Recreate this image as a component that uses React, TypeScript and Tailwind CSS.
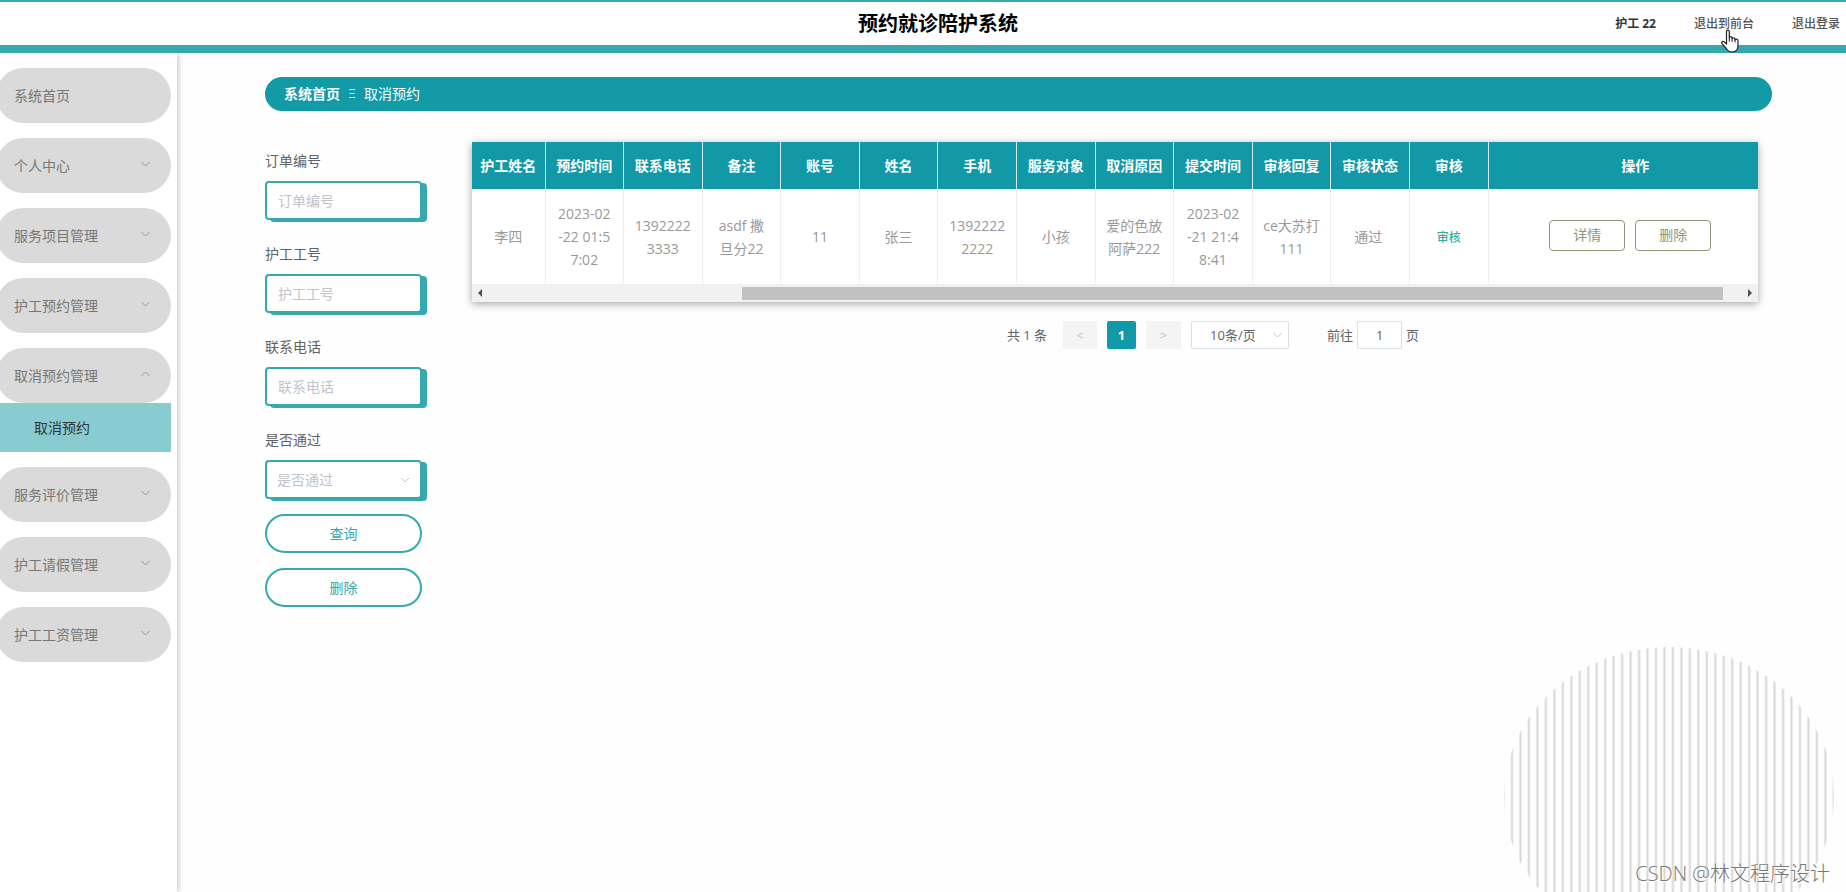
import type { ReactNode } from 'react'

const menus = [
  { label: '系统首页' },
  { label: '个人中心', arrow: 'down' },
  { label: '服务项目管理', arrow: 'down' },
  { label: '护工预约管理', arrow: 'down' },
  { label: '取消预约管理', arrow: 'up', children: ['取消预约'] },
  { label: '服务评价管理', arrow: 'down' },
  { label: '护工请假管理', arrow: 'down' },
  { label: '护工工资管理', arrow: 'down' },
]

const columns = [
  { title: '护工姓名', value: '李四' },
  { title: '预约时间', value: '2023-02\n-22 01:5\n7:02' },
  { title: '联系电话', value: '1392222\n3333' },
  { title: '备注', value: 'asdf 撒\n旦分22' },
  { title: '账号', value: '11' },
  { title: '姓名', value: '张三' },
  { title: '手机', value: '1392222\n2222' },
  { title: '服务对象', value: '小孩' },
  { title: '取消原因', value: '爱的色放\n阿萨222' },
  { title: '提交时间', value: '2023-02\n-21 21:4\n8:41' },
  { title: '审核回复', value: 'ce大苏打\n111' },
  { title: '审核状态', value: '通过 ' },
]

export default function App() {
  return (
    <div className="relative flex min-h-screen flex-col overflow-hidden bg-[#fefefe] font-['Open_Sans','Noto_Sans_CJK_SC',sans-serif] text-sm">
      <Header />
      <div className="flex flex-1">
        <Sidebar />
        <main className="min-w-0 flex-1 pt-6 pr-[74px] pl-[88px]">
          <nav className="flex h-[34px] items-center rounded-full bg-[#129aa7] pl-[19px] text-white">
            <a href="#" className="font-bold">
              系统首页
            </a>
            <span className="mx-2 w-2 text-center text-xs">Ξ</span>
            <span>取消预约</span>
          </nav>
          <div className="mt-[31px] flex gap-[50px]">
            <SearchForm />
            <section className="min-w-0 flex-1 pr-[14px]">
              <OrderTable />
              <Pagination />
            </section>
          </div>
        </main>
      </div>
      <StripedDisc />
      <p className="absolute right-4 bottom-1 text-xl leading-7 font-light text-[#777] [text-shadow:1px_1px_0_#fff]">
        CSDN @林文程序设计
      </p>
    </div>
  )
}

function Header() {
  return (
    <header className="relative z-10 flex h-[53px] items-center border-t-2 border-b-8 border-[#36a8ae] bg-white pt-px">
      <div className="flex-1" />
      <h1 className="pl-9 text-xl font-bold text-black">预约就诊陪护系统</h1>
      <div className="flex flex-1 items-center justify-end gap-[38px] pr-[6px] text-xs font-medium text-[#555]">
        <span className="font-bold text-[#333]">护工 22</span>
        <a href="#" className="relative">
          退出到前台
          <HandCursor />
        </a>
        <a href="#">退出登录</a>
      </div>
    </header>
  )
}

function Sidebar() {
  return (
    <aside className="w-[177px] shrink-0 bg-white pt-[15px] pr-[6px] shadow-[1px_0_6px_rgba(0,0,0,0.25)]">
      <ul className="flex flex-col gap-[15px]">
        {menus.map((menu) => (
          <li key={menu.label}>
            <button
              type="button"
              className="-ml-1 flex h-[55px] w-[175px] items-center justify-between rounded-full bg-[#dadada] pr-[21px] pl-[18px] text-[#777]"
            >
              {menu.label}
              {menu.arrow && <Chevron up={menu.arrow === 'up'} className="-mt-1 h-[6px] w-[9px] text-[#999]" />}
            </button>
            {menu.children?.map((child) => (
              <a key={child} href="#" className="flex h-[49px] items-center bg-[#88cbd1] pl-[34px] text-[#333]">
                {child}
              </a>
            ))}
          </li>
        ))}
      </ul>
    </aside>
  )
}

const boxClass =
  'h-[39px] w-full rounded-sm border-2 border-[#36a8ae] bg-white text-sm shadow-[5px_2px_0_#36a8ae] outline-none'

function SearchForm() {
  return (
    <form className="w-[157px] shrink-0 pt-[9px]">
      <div className="flex flex-col gap-6">
        {['订单编号', '护工工号', '联系电话'].map((name) => (
          <Field key={name} id={name} label={name}>
            <input
              id={name}
              type="text"
              placeholder={name}
              className={`${boxClass} px-[11px] pb-px placeholder:text-[#c0c4cc]`}
            />
          </Field>
        ))}
        <Field id="是否通过" label="是否通过">
          <select id="是否通过" defaultValue="" className={`${boxClass} appearance-none px-[10px] text-[#c0c4cc]`}>
            <option value="">是否通过</option>
          </select>
          <Chevron className="pointer-events-none absolute right-[12px] bottom-4 h-[6px] w-[10px] text-[#c0c4cc]" />
        </Field>
      </div>
      <div className="mt-[15px] flex flex-col gap-[15px]">
        {['查询', '删除'].map((name) => (
          <button
            key={name}
            type="button"
            className="h-[39px] w-full rounded-full border-2 border-[#36a8ae] bg-white text-[#36a8ae]"
          >
            {name}
          </button>
        ))}
      </div>
    </form>
  )
}

function Field({ id, label, children }: { id: string; label: string; children: ReactNode }) {
  return (
    <div className="relative">
      <label htmlFor={id} className="mb-[10px] block leading-5 text-[#606266]">
        {label}
      </label>
      {children}
    </div>
  )
}

function OrderTable() {
  return (
    <div className="bg-white shadow-[0_2px_8px_rgba(0,0,0,0.35)]">
      <table className="w-full table-fixed border-collapse text-center">
        <thead className="bg-[#1199a8] text-white">
          <tr className="h-[47px]">
            {columns.map((col, i) => (
              <th
                key={col.title}
                className={`border-r border-[#d5eef0] font-bold whitespace-nowrap ${i === 0 ? 'w-[73px]' : ''}`}
              >
                {col.title}
              </th>
            ))}
            <th className="border-r border-[#d5eef0] font-bold">审核</th>
            <th className="w-[270px] pl-6 font-bold">操作</th>
          </tr>
        </thead>
        <tbody className="text-[#999]">
          <tr className="h-[95px]">
            {columns.map((col) => (
              <td key={col.title} className="border-r border-[#ebeef5] leading-[23px] whitespace-pre">
                {col.value}
              </td>
            ))}
            <td className="border-r border-[#ebeef5]">
              <button type="button" className="text-xs font-medium text-[#2fae9c]">
                审核
              </button>
            </td>
            <td>
              <div className="flex justify-center gap-[10px] pb-[3px] pl-[14px]">
                {['详情', '删除'].map((name) => (
                  <button
                    key={name}
                    type="button"
                    className="h-[31px] w-[76px] rounded-sm border border-[#8f9779] text-[#8f9779]"
                  >
                    {name}
                  </button>
                ))}
              </div>
            </td>
          </tr>
        </tbody>
      </table>
      <div className="flex h-[18px] items-center justify-between bg-[#f1f1f1] px-[6px]">
        <svg viewBox="0 0 4 8" className="h-2 w-1 fill-[#505050]">
          <path d="M4 0v8L0 4z" />
        </svg>
        <div className="mr-[25px] ml-auto h-[13px] w-[77%] bg-[#c1c1c1]" />
        <svg viewBox="0 0 4 8" className="h-2 w-1 fill-[#505050]">
          <path d="M0 0v8l4-4z" />
        </svg>
      </div>
    </div>
  )
}

function Pagination() {
  return (
    <div className="mt-[19px] flex items-center justify-center pl-[196px] text-[13px] text-[#606266]">
      <span>共 1 条</span>
      <button type="button" disabled className="ml-4 h-7 w-[34px] bg-[#f4f4f5] text-[#c0c4cc]">
        &lt;
      </button>
      <button type="button" className="mx-[10px] h-7 w-[29px] rounded-xs bg-[#1199a8] font-bold text-white">
        1
      </button>
      <button type="button" disabled className="h-7 w-[35px] bg-[#f4f4f5] text-[#c0c4cc]">
        &gt;
      </button>
      <div className="relative ml-[10px]">
        <select
          aria-label="10条/页"
          className="h-7 w-[98px] appearance-none rounded-xs border border-[#dcdfe6] bg-white pl-[18px] outline-none"
        >
          <option>10条/页</option>
        </select>
        <Chevron className="pointer-events-none absolute top-[11px] right-[7px] h-[6px] w-[9px] text-[#c0c4cc]" />
      </div>
      <label className="ml-[38px] flex items-center gap-1">
        前往
        <input
          type="text"
          defaultValue="1"
          className="h-7 w-[45px] rounded-xs border border-[#dcdfe6] bg-white text-center outline-none"
        />
        页
      </label>
    </div>
  )
}

function Chevron({ up, className }: { up?: boolean; className: string }) {
  return (
    <svg viewBox="0 0 9 6" fill="none" stroke="currentColor" className={className}>
      <path d={up ? 'M0.5 5l4-4 4 4' : 'M0.5 1l4 4 4-4'} />
    </svg>
  )
}

function HandCursor() {
  return (
    <svg viewBox="0 0 18 24" className="absolute top-[13px] left-[27px] h-6 w-[18px]" strokeLinejoin="round">
      <path
        d="M5.5 15V2.7C5.5.6 8.3.6 8.3 2.7V9c0-1.8 2.8-1.8 2.8.1v.7c.2-1.5 2.9-1.4 2.9.4v.8c.3-1.3 3-1.2 3 .6v5.2c0 3.6-2.3 6.2-5.8 6.2-3.2 0-4.6-1.300-5.900-3.500L1 14.600c-.9-1.700.9-2.900 2.200-1.700z"
        fill="#fff"
        stroke="#222"
        strokeWidth="1.2"
      />
      <path d="M8.3 9v3.500M11.1 9.500v3.500M14 10.500v3" stroke="#222" fill="none" />
    </svg>
  )
}

function StripedDisc() {
  return (
    <svg viewBox="0 0 330 246" className="pointer-events-none absolute right-3 bottom-0 h-[246px] w-[330px]">
      <defs>
        <pattern id="stripes" width="8.47" height="10" patternUnits="userSpaceOnUse">
          <rect x="7" width="1.47" height="10" fill="#d6d6d6" />
          <rect x="0" width="0.5" height="10" fill="#d6d6d6" />
        </pattern>
      </defs>
      <ellipse cx="165" cy="151" rx="165" ry="150" fill="url(#stripes)" />
    </svg>
  )
}
